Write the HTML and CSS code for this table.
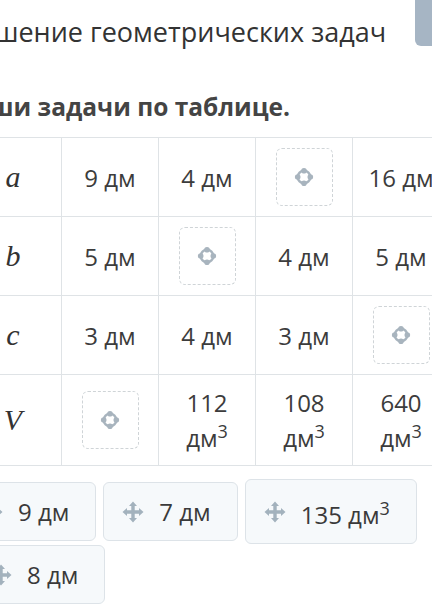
FILE: index.html
```html
<!DOCTYPE html>
<html lang="ru">
<head>
<meta charset="utf-8">
<title>Решение геометрических задач</title>
<link rel="stylesheet" href="styles.css">
</head>
<body>
<div class="page">
  <header class="top">
    <h1 class="title">Решение геометрических задач</h1>
    <div class="corner-btn"></div>
  </header>
  <p class="task">Реши задачи по таблице.</p>
  <table class="grid">
    <colgroup><col><col><col><col><col></colgroup>
    <tr>
      <th><span class="var">a</span></th>
      <td>9 дм</td>
      <td>4 дм</td>
      <td><div class="drop"><svg class="target" viewBox="0 0 24 24"><circle cx="12" cy="12" r="6.3" fill="none" stroke="currentColor" stroke-width="2.4"/><circle cx="12" cy="5.7" r="2.8"/><circle cx="18.3" cy="12" r="2.8"/><circle cx="12" cy="18.3" r="2.8"/><circle cx="5.7" cy="12" r="2.8"/></svg></div></td>
      <td>16 дм</td>
    </tr>
    <tr>
      <th><span class="var">b</span></th>
      <td>5 дм</td>
      <td><div class="drop"><svg class="target" viewBox="0 0 24 24"><circle cx="12" cy="12" r="6.3" fill="none" stroke="currentColor" stroke-width="2.4"/><circle cx="12" cy="5.7" r="2.8"/><circle cx="18.3" cy="12" r="2.8"/><circle cx="12" cy="18.3" r="2.8"/><circle cx="5.7" cy="12" r="2.8"/></svg></div></td>
      <td>4 дм</td>
      <td>5 дм</td>
    </tr>
    <tr>
      <th><span class="var">c</span></th>
      <td>3 дм</td>
      <td>4 дм</td>
      <td>3 дм</td>
      <td><div class="drop"><svg class="target" viewBox="0 0 24 24"><circle cx="12" cy="12" r="6.3" fill="none" stroke="currentColor" stroke-width="2.4"/><circle cx="12" cy="5.7" r="2.8"/><circle cx="18.3" cy="12" r="2.8"/><circle cx="12" cy="18.3" r="2.8"/><circle cx="5.7" cy="12" r="2.8"/></svg></div></td>
    </tr>
    <tr class="tall">
      <th><span class="var">V</span></th>
      <td><div class="drop"><svg class="target" viewBox="0 0 24 24"><circle cx="12" cy="12" r="6.3" fill="none" stroke="currentColor" stroke-width="2.4"/><circle cx="12" cy="5.7" r="2.8"/><circle cx="18.3" cy="12" r="2.8"/><circle cx="12" cy="18.3" r="2.8"/><circle cx="5.7" cy="12" r="2.8"/></svg></div></td>
      <td>112<br>дм<sup>3</sup></td>
      <td>108<br>дм<sup>3</sup></td>
      <td>640<br>дм<sup>3</sup></td>
    </tr>
  </table>
  <div class="bank">
    <div class="chip"><svg class="move" viewBox="0 0 24 24"><path d="M12 1.5 L16 6 H13.7 V10.3 H18 V8 L22.5 12 L18 16 V13.7 H13.7 V18 H16 L12 22.5 L8 18 H10.3 V13.7 H6 V16 L1.5 12 L6 8 V10.3 H10.3 V6 H8 Z"/></svg><span>9 дм</span></div>
    <div class="chip"><svg class="move" viewBox="0 0 24 24"><path d="M12 1.5 L16 6 H13.7 V10.3 H18 V8 L22.5 12 L18 16 V13.7 H13.7 V18 H16 L12 22.5 L8 18 H10.3 V13.7 H6 V16 L1.5 12 L6 8 V10.3 H10.3 V6 H8 Z"/></svg><span>7 дм</span></div>
    <div class="chip"><svg class="move" viewBox="0 0 24 24"><path d="M12 1.5 L16 6 H13.7 V10.3 H18 V8 L22.5 12 L18 16 V13.7 H13.7 V18 H16 L12 22.5 L8 18 H10.3 V13.7 H6 V16 L1.5 12 L6 8 V10.3 H10.3 V6 H8 Z"/></svg><span>135 дм<sup>3</sup></span></div>
    <div class="chip chip-shift"><svg class="move" viewBox="0 0 24 24"><path d="M12 1.5 L16 6 H13.7 V10.3 H18 V8 L22.5 12 L18 16 V13.7 H13.7 V18 H16 L12 22.5 L8 18 H10.3 V13.7 H6 V16 L1.5 12 L6 8 V10.3 H10.3 V6 H8 Z"/></svg><span>8 дм</span></div>
  </div>
</div>
</body>
</html>
```

FILE: styles.css
```css
html, body {
  margin: 0;
  padding: 0;
  background: #ffffff;
  overflow: hidden;
}

body {
  font-family: "Open Sans", "Noto Sans", sans-serif;
  color: #3a3a3a;
}

.page {
  margin-left: -36px;
  width: 503px;
}

.top {
  display: grid;
  grid-template-columns: 1fr 52px;
  height: 46px;
}

.title {
  margin: 0 0 0 -1px;
  padding-top: 14px;
  font-size: 27px;
  font-weight: 400;
  line-height: 36px;
  color: #333333;
  white-space: nowrap;
}

.corner-btn {
  background: #a6b5c4;
  border-radius: 0 0 0 6px;
  height: 46px;
}

.task {
  margin: 44px 0 0 -4px;
  font-size: 24.5px;
  font-weight: 700;
  line-height: 34px;
  color: #444444;
  white-space: nowrap;
}

.grid {
  margin-top: 13px;
  border-collapse: collapse;
  table-layout: fixed;
  width: 485px;
}

.grid col {
  width: 97px;
}

.grid th,
.grid td {
  border: 1px solid #dfe3e6;
  padding: 10px 0;
  height: 58px;
  text-align: center;
  vertical-align: middle;
  font-size: 24px;
  font-weight: 400;
  line-height: 35px;
  color: #3c3c3c;
}

.grid .tall th,
.grid .tall td {
  height: 70px;
}

.grid sup {
  font-size: 0.75em;
  line-height: 0;
}

.var {
  font-family: "Liberation Serif", "DejaVu Serif", serif;
  font-style: italic;
  font-size: 30px;
  color: #333333;
}

.drop {
  width: 55px;
  height: 56px;
  margin: 0 auto;
  border: 1px dashed #cfd4d7;
  border-radius: 6px;
  display: flex;
  align-items: center;
  justify-content: center;
}

.target {
  width: 24px;
  height: 24px;
  color: #a8b4be;
  fill: #a8b4be;
}

.bank {
  margin: 13px 0 0 -2px;
  display: flex;
  flex-wrap: wrap;
  align-items: baseline;
  column-gap: 7px;
  row-gap: 1px;
}

.chip {
  display: flex;
  align-items: center;
  gap: 14px;
  padding: 12px 26px 12px 17px;
  border: 1px solid #dde3e8;
  border-radius: 6px;
  background: #f6f9fb;
  font-size: 24px;
  line-height: 33px;
  color: #3a3a3a;
}

.chip sup {
  font-size: 0.75em;
  vertical-align: 0.5em;
}

.chip-shift {
  margin-left: 9px;
}

.move {
  width: 24px;
  height: 24px;
  fill: #a3b2bd;
  flex: none;
}
```
